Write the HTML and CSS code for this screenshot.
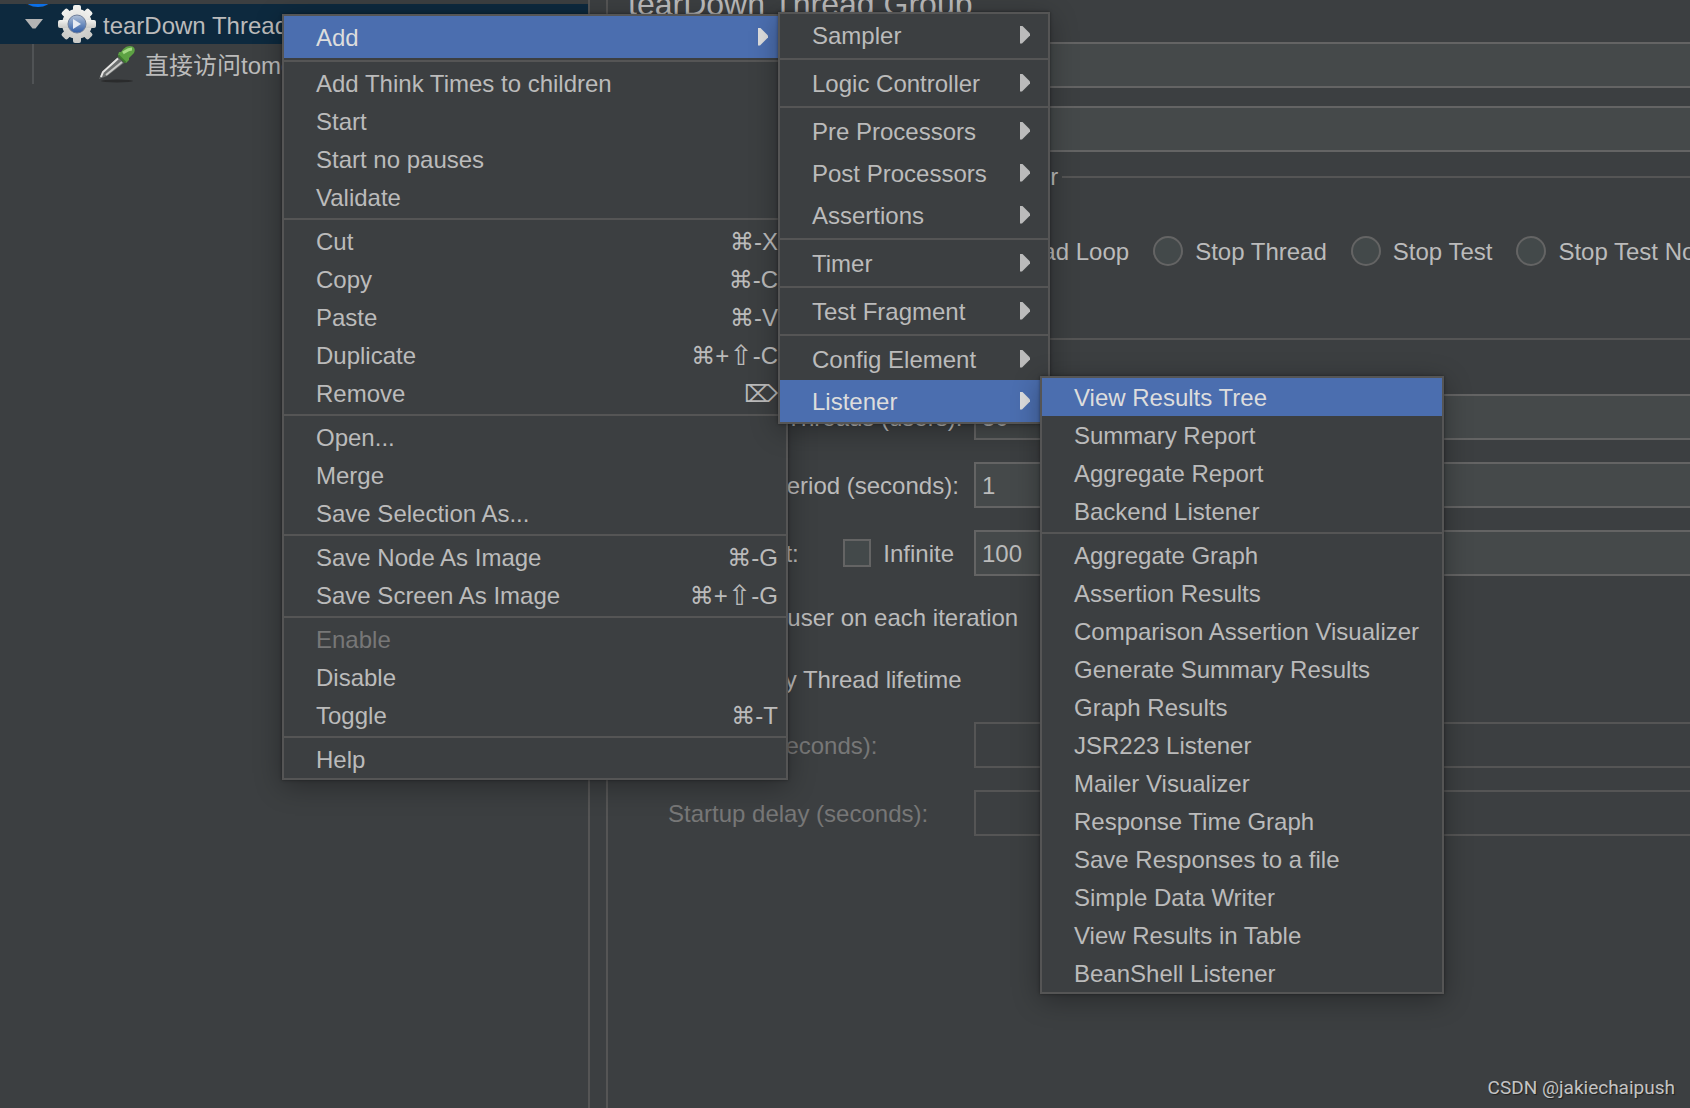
FILE: index.html
```html
<!DOCTYPE html>
<html lang="en">
<head>
<meta charset="utf-8">
<title>tearDown Thread Group</title>
<link rel="stylesheet" href="styles.css">
</head>
<body>
<div class="window">
  <aside class="tree">
    <div class="tree-plan">
      <svg class="plan-icon" width="40" height="4" viewBox="0 0 40 4" aria-hidden="true"><ellipse cx="19" cy="-5" rx="16" ry="8" fill="#2b2d2f"/><ellipse cx="19" cy="-5" rx="13" ry="8" fill="#0a6fe8"/></svg>
    </div>
    <div class="tree-row selected">
      <svg class="tree-toggle" width="18" height="10" viewBox="0 0 18 10" aria-hidden="true"><path d="M0 0h18L10.500 9.500h-3z" fill="#b4b4b4"/></svg>
      <svg class="gear-icon" width="38" height="38" viewBox="0 0 38 38" aria-hidden="true">
        <defs>
          <linearGradient id="gearFill" x1="0" y1="0" x2="0" y2="1"><stop offset="0" stop-color="#f2f2ef"/><stop offset="1" stop-color="#c9c9c6"/></linearGradient>
          <linearGradient id="hubFill" x1="0" y1="0" x2="0" y2="1"><stop offset="0" stop-color="#b3c2d8"/><stop offset=".5" stop-color="#6f8fc0"/><stop offset="1" stop-color="#2f5ba4"/></linearGradient>
        </defs>
        <g fill="url(#gearFill)">
          <circle cx="19" cy="19" r="15"/>
          <rect x="15" y="0" width="8" height="38" rx="2"/>
          <rect x="0" y="15" width="38" height="8" rx="2"/>
          <rect x="15" y="0" width="8" height="38" rx="2" transform="rotate(45 19 19)"/>
          <rect x="15" y="0" width="8" height="38" rx="2" transform="rotate(-45 19 19)"/>
        </g>
        <circle cx="19" cy="19" r="9" fill="url(#hubFill)" stroke="#6f7f9b"/>
        <path d="M15 14v10l8-5z" fill="#e6ebf3"/>
      </svg>
      <span class="tree-label">tearDown Thread Group</span>
    </div>
    <div class="tree-row child">
      <svg class="dropper-icon" width="40" height="38" viewBox="0 0 40 38" aria-hidden="true">
        <ellipse cx="19" cy="36" rx="16" ry="1.500" fill="#2a2b2c"/>
        <path d="M1 34l3-7L20 12l6 6L9 31z" fill="#6c6f6f"/>
        <path d="M3 32L5 27 20 13.500" stroke="#e4e4e2" stroke-width="2" fill="none"/>
        <path d="M8 30L24 17" stroke="#c9cac8" stroke-width="2" fill="none"/>
        <path d="M20 10l8 8 3-3v-2l5-5c2-4 0-7-4-7-4 0-7 3-9 6h-2z" fill="#5da143"/>
        <path d="M25 8c3-2 5-4 9-4" stroke="#a5da85" stroke-width="3" fill="none"/>
        <path d="M20.500 10.500l7 7" stroke="#3f7a30" stroke-width="2"/>
      </svg>
      <span class="tree-label">直接访问tomcat</span>
    </div>
  </aside>
  <div class="splitter"></div>
  <main class="editor">
    <form class="panel">
      <h1 class="title">tearDown Thread Group</h1>
      <div class="text-row"><label for="name">Name:</label><input id="name" class="field" type="text"></div>
      <div class="text-row"><label for="comments">Comments:</label><input id="comments" class="field" type="text"></div>
      <fieldset class="group action">
        <legend>Action to be taken after a Sampler error</legend>
        <div class="radios">
          <label><input type="radio" name="onerror">Continue</label>
          <label><input type="radio" name="onerror">Start Next Thread Loop</label>
          <label><input type="radio" name="onerror">Stop Thread</label>
          <label><input type="radio" name="onerror">Stop Test</label>
          <label><input type="radio" name="onerror">Stop Test Now</label>
        </div>
      </fieldset>
      <div class="props">
        <div class="prop"><label for="threads">Number of Threads (users):</label><input id="threads" class="field" type="text" value="50"></div>
        <div class="prop"><label for="ramp">Ramp-up period (seconds):</label><input id="ramp" class="field" type="text" value="1"></div>
        <div class="prop">
          <span class="loop"><label for="loops">Loop Count:</label><label class="check"><input type="checkbox">Infinite</label></span>
          <input id="loops" class="field" type="text" value="100">
        </div>
        <label class="check line"><input type="checkbox">Same user on each iteration</label>
        <label class="check line"><input type="checkbox">Specify Thread lifetime</label>
        <div class="prop disabled"><label for="duration">Duration (seconds):</label><input id="duration" class="field" type="text" disabled></div>
        <div class="prop disabled"><label for="delay">Startup delay (seconds):</label><input id="delay" class="field" type="text" disabled></div>
      </div>
    </form>
  </main>
</div>

<div class="menu menu-main" role="menu">
  <button class="item tall active">Add<i class="arrow"></i></button>
  <hr>
  <button class="item">Add Think Times to children</button>
  <button class="item">Start</button>
  <button class="item">Start no pauses</button>
  <button class="item">Validate</button>
  <hr>
  <button class="item">Cut<kbd><b>⌘</b>-X</kbd></button>
  <button class="item">Copy<kbd><b>⌘</b>-C</kbd></button>
  <button class="item">Paste<kbd><b>⌘</b>-V</kbd></button>
  <button class="item">Duplicate<kbd><b>⌘</b>+<b class="shift">⇧</b>-C</kbd></button>
  <button class="item">Remove<kbd><b>⌦</b></kbd></button>
  <hr>
  <button class="item">Open...</button>
  <button class="item">Merge</button>
  <button class="item">Save Selection As...</button>
  <hr>
  <button class="item">Save Node As Image<kbd><b>⌘</b>-G</kbd></button>
  <button class="item">Save Screen As Image<kbd><b>⌘</b>+<b class="shift">⇧</b>-G</kbd></button>
  <hr>
  <button class="item" disabled>Enable</button>
  <button class="item">Disable</button>
  <button class="item">Toggle<kbd><b>⌘</b>-T</kbd></button>
  <hr>
  <button class="item">Help</button>
</div>

<div class="menu menu-add" role="menu">
  <button class="item tall">Sampler<i class="arrow"></i></button>
  <hr>
  <button class="item tall">Logic Controller<i class="arrow"></i></button>
  <hr>
  <button class="item tall">Pre Processors<i class="arrow"></i></button>
  <button class="item tall">Post Processors<i class="arrow"></i></button>
  <button class="item tall">Assertions<i class="arrow"></i></button>
  <hr>
  <button class="item tall">Timer<i class="arrow"></i></button>
  <hr>
  <button class="item tall">Test Fragment<i class="arrow"></i></button>
  <hr>
  <button class="item tall">Config Element<i class="arrow"></i></button>
  <button class="item tall active">Listener<i class="arrow"></i></button>
</div>

<div class="menu menu-listener" role="menu">
  <button class="item active">View Results Tree</button>
  <button class="item">Summary Report</button>
  <button class="item">Aggregate Report</button>
  <button class="item">Backend Listener</button>
  <hr>
  <button class="item">Aggregate Graph</button>
  <button class="item">Assertion Results</button>
  <button class="item">Comparison Assertion Visualizer</button>
  <button class="item">Generate Summary Results</button>
  <button class="item">Graph Results</button>
  <button class="item">JSR223 Listener</button>
  <button class="item">Mailer Visualizer</button>
  <button class="item">Response Time Graph</button>
  <button class="item">Save Responses to a file</button>
  <button class="item">Simple Data Writer</button>
  <button class="item">View Results in Table</button>
  <button class="item">BeanShell Listener</button>
</div>

<div class="watermark">CSDN @jakiechaipush</div>
</body>
</html>
```

FILE: styles.css
```css
* { box-sizing: border-box; }

body {
  margin: 0;
  height: 100vh;
  overflow: hidden;
  position: relative;
  background: #3c3f41;
  color: #bbb;
  font: 24px/38px "Liberation Sans", "Noto Sans CJK SC", Arial, sans-serif;
  white-space: nowrap;
}

input, button { font: inherit; color: inherit; }

.window { display: flex; height: 100%; }

/* test plan tree */
.tree { flex: 0 0 588px; overflow: hidden; }
.tree-plan { height: 4px; padding-left: 19px; line-height: 0; }
.tree-row {
  display: flex;
  align-items: center;
  height: 40px;
  padding-left: 25px;
}
.tree-row.selected { background: #0d293e; }
.tree-toggle { margin-right: 15px; }
.tree-label { margin-left: 7px; padding-top: 4px; }
.tree-row.child {
  margin-left: 32px;
  padding-left: 64px;
  border-left: 2px solid #505355;
}

.splitter {
  flex: 0 0 20px;
  border: solid #555;
  border-width: 0 2px;
}

/* thread group editor */
.editor { flex: 1; min-width: 0; overflow: hidden; }
.panel {
  width: calc(100% + 60px);
  padding-left: 20px;
}
.title {
  margin: -16px 0 18px;
  font-size: 32px;
  line-height: 40px;
  font-weight: normal;
}
.field {
  flex: 1;
  min-width: 0;
  height: 46px;
  padding: 2px 6px 0;
  border: 2px solid #646464;
  background: #45494a;
  border-radius: 0;
}
.field:disabled { background: transparent; border-color: #555; }
.text-row { display: flex; align-items: center; height: 46px; margin-bottom: 18px; }
.text-row label { flex: 0 0 140px; }

.group {
  margin: 0;
  padding: 0;
  border: 2px solid #555;
  height: 170px;
}
.group legend { padding: 0 4px; margin-left: 4px; line-height: 14px; }
.radios { display: flex; gap: 24px; padding: 49px 0 0 46px; }
.radios label, .check { display: flex; align-items: center; gap: 12px; }
input[type="radio"], input[type="checkbox"] {
  appearance: none;
  margin: 0 0 2px;
  width: 30px;
  height: 30px;
  border: 2px solid #646464;
  background: #43494a;
}
input[type="radio"] { border-radius: 50%; }
input[type="checkbox"] { width: 28px; height: 28px; }

.props {
  display: flex;
  flex-direction: column;
  gap: 22px;
  padding: 54px 0 0 40px;
}
.prop { display: grid; grid-template-columns: 286px 1fr; column-gap: 20px; align-items: center; }
.prop label { padding-top: 2px; }
.loop { display: flex; justify-content: space-between; }
.line { height: 40px; padding-left: 10px; }
.disabled { color: #777; }

/* popup menus */
.menu {
  position: absolute;
  display: flex;
  flex-direction: column;
  border: 2px solid #555;
  background: #3c3f41;
  box-shadow: 0 6px 26px rgba(0, 0, 0, .32), 0 0 3px rgba(0, 0, 0, .4);
}
.menu-main { left: 282px; top: 14px; width: 506px; }
.menu-add { left: 778px; top: 12px; width: 272px; }
.menu-listener { left: 1040px; top: 376px; width: 404px; }
.menu hr {
  width: 100%;
  height: 2px;
  margin: 2px 0;
  border: 0;
  background: #555;
}
.item {
  display: flex;
  align-items: center;
  justify-content: space-between;
  height: 38px;
  padding: 2px 8px 0 32px;
  border: 0;
  background: none;
  text-align: left;
}
.item.tall { height: 42px; padding-right: 18px; }
.item.active { background: #4b6eaf; color: #ddd; }
.item:disabled { color: #777; }
.item kbd { display: flex; font: inherit; }
.item kbd b { font: 24px/38px "DejaVu Sans", sans-serif; }
.item kbd .shift { font-size: 28px; }
.arrow {
  width: 10px;
  height: 18px;
  margin-bottom: 3px;
  background: currentColor;
  clip-path: polygon(0 0, 20% 0, 100% 45%, 100% 55%, 20% 100%, 0 100%);
}

.watermark {
  position: absolute;
  right: 15px;
  bottom: 8px;
  font: 19px/24px Roboto, sans-serif;
  color: #c4c4c4;
  text-shadow: 1px 1px 1px #222;
}
```
